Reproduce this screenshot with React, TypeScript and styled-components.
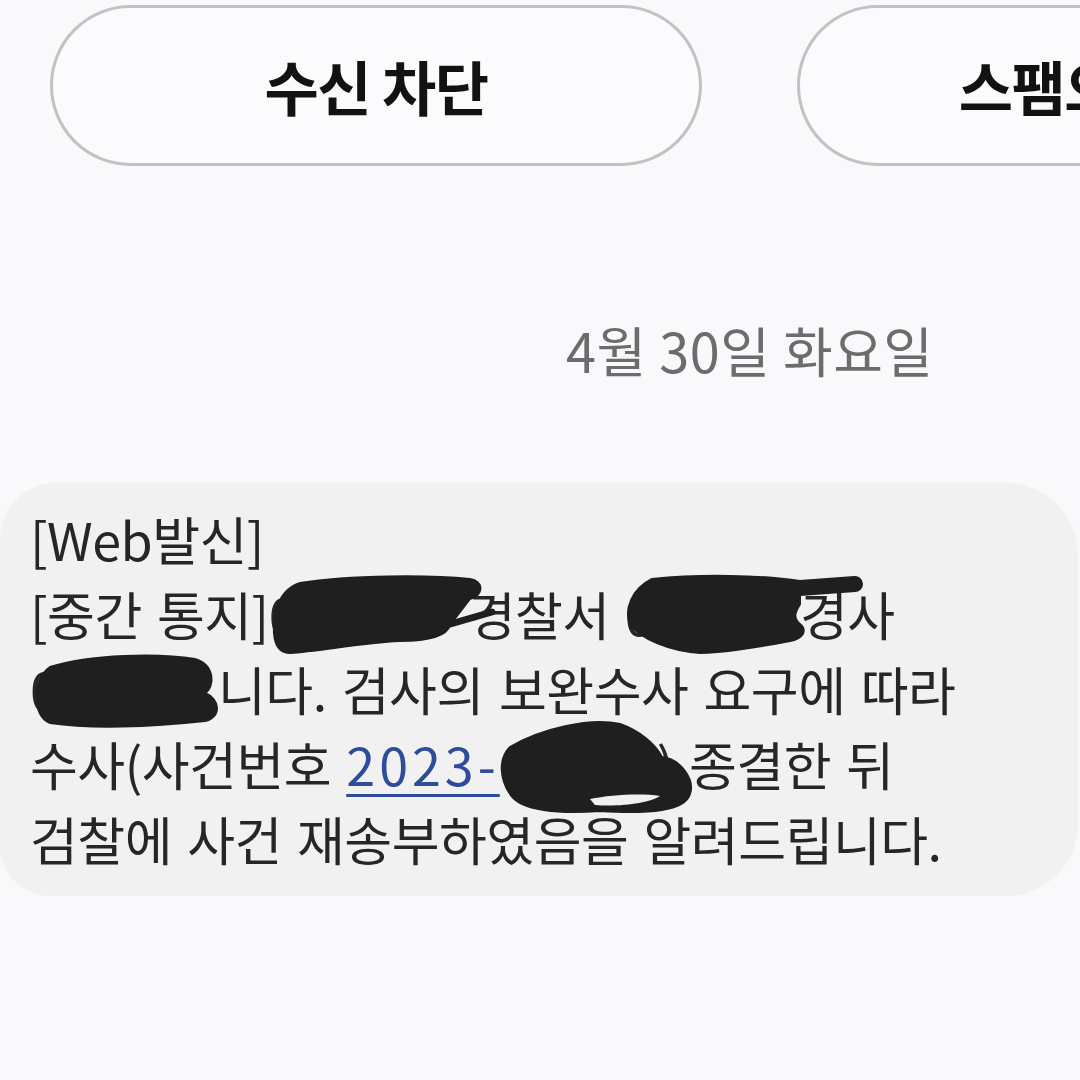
import React from "react";
import styled, { createGlobalStyle } from "styled-components";

const Global = createGlobalStyle`
  html, body { margin: 0; padding: 0; background: #f9f9fb; }
  body { font-family: "Noto Sans CJK KR", "Noto Sans", sans-serif; }
`;

const Screen = styled.div`
  width: 1080px;
  height: 1080px;
  overflow: hidden;
  background: #f9f9fb;
  display: flex;
  flex-direction: column;
`;

const ActionRow = styled.div`
  display: flex;
  gap: 95px;
  padding: 5px 0 0 50px;
  flex-shrink: 0;
`;

const PillButton = styled.button`
  flex: 0 0 auto;
  width: 652px;
  height: 161px;
  box-sizing: border-box;
  border: 3px solid #c2c2c4;
  border-radius: 81px;
  background: #fbfbfd;
  font-family: "Noto Sans CJK KR", sans-serif;
  font-weight: 700;
  font-size: 59px;
  color: #121212;
  letter-spacing: -1.5px;
  display: flex;
  align-items: center;
  justify-content: center;
  padding: 0;
`;

const DateRow = styled.div`
  padding: 154px 0 0 566px;
  font-size: 54px;
  line-height: 60px;
  color: #6c6c6e;
  letter-spacing: 0.5px;
`;

const Bubble = styled.div`
  position: relative;
  margin-top: 103px;
  width: 1078px;
  height: 413px;
  box-sizing: border-box;
  background: #f1f1f2;
  border-radius: 56px 72px 72px 50px;
  padding: 18px 0 0 30px;
  font-size: 52px;
  line-height: 75px;
  letter-spacing: -0.5px;
  word-spacing: 4px;
  color: #262626;
`;

const Line = styled.div`
  white-space: nowrap;
`;

const Hidden = styled.span<{ $w: number }>`
  display: inline-block;
  width: ${(p) => p.$w}px;
  overflow: hidden;
  vertical-align: top;
`;

const Link = styled.span`
  color: #2d4c9c;
  letter-spacing: 4px;
  text-decoration: underline;
  text-decoration-thickness: 3px;
  text-underline-offset: 8px;
`;

const Scribbles = styled.svg`
  position: absolute;
  left: 0;
  top: 0;
  pointer-events: none;
`;

export default function App() {
  return (
    <Screen>
      <Global />
      <ActionRow>
        <PillButton>수신 차단</PillButton>
        <PillButton>스팸으로 신고</PillButton>
      </ActionRow>
      <DateRow>4월 30일 화요일</DateRow>
      <Bubble>
        <Line>[Web발신]</Line>
        <Line>
          [중간 통지]<Hidden $w={199}>0000</Hidden>경찰서 <Hidden $w={160}>0000</Hidden> 경사
        </Line>
        <Line>
          <Hidden $w={188}>000입</Hidden>니다. 검사의 보완수사 요구에 따라
        </Line>
        <Line>
          수사(사건번호 <Link>2023-<Hidden $w={157}>0000</Hidden></Link>) 종결한 뒤
        </Line>
        <Line>검찰에 사건 재송부하였음을 알려드립니다.</Line>
        <Scribbles width={1078} height={413} viewBox="0 484 1078 413">
          <g fill="#1f1f1f" stroke="#1f1f1f" strokeLinejoin="round" strokeLinecap="round">
            <path
              strokeWidth={2}
              d="M300 584 C350 576 430 576 470 580 C484 582 484 596 470 600 L450 626 C446 640 420 642 400 642 C360 644 320 652 290 654 C272 654 272 630 276 612 C280 596 288 588 300 584 Z"
            />
            <path fill="none" strokeWidth={7} d="M440 628 L492 613" />
            <path
              strokeWidth={2}
              d="M652 580 C700 575 760 576 800 582 L800 605 C796 612 792 618 800 625 C808 632 802 640 790 642 C760 648 720 654 700 654 C670 652 640 640 630 625 C624 610 632 590 652 580 Z"
            />
            <path fill="none" strokeWidth={16} d="M760 592 L855 585" />
            <path
              strokeWidth={2}
              d="M50 668 C90 655 160 654 195 660 C215 666 215 688 205 694 C220 700 222 718 205 722 C150 728 90 730 50 724 C32 718 32 680 50 668 Z"
            />
            <path
              strokeWidth={2}
              d="M510 748 C540 730 590 718 620 725 C640 732 655 745 662 758 C680 760 695 780 690 795 C685 812 650 815 600 812 C560 815 520 812 510 795 C500 780 498 760 510 748 Z"
            />
          </g>
          <path fill="#f1f1f2" d="M590 800 C610 796 640 794 660 797 C650 804 620 808 595 806 Z" />
        </Scribbles>
      </Bubble>
    </Screen>
  );
}
